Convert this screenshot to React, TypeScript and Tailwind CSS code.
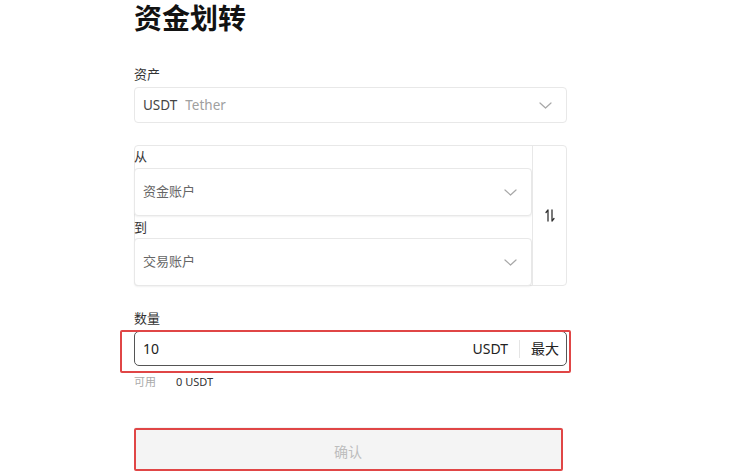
import React from "react";

const font = { fontFamily: '"Noto Sans", "Noto Sans CJK SC", sans-serif' };

function Chevron() {
  return (
    <svg width="13" height="7" viewBox="0 0 13 7" fill="none">
      <path d="M1 1l5.5 5 5.5-5" stroke="#a8a8a8" strokeWidth="1.2" strokeLinecap="round" strokeLinejoin="round" />
    </svg>
  );
}

function SwapIcon() {
  return (
    <svg width="10" height="13" viewBox="0 0 10 13" fill="none">
      <path d="M3 12V1L1 3.5" stroke="#333" strokeWidth="1.3" strokeLinecap="round" strokeLinejoin="round" />
      <path d="M7 1v11l2-2.5" stroke="#333" strokeWidth="1.3" strokeLinecap="round" strokeLinejoin="round" />
    </svg>
  );
}

function SelectBox({ children }: { children: React.ReactNode }) {
  return (
    <div className="h-[48px] flex items-center justify-between pl-2 pr-[14px] border border-[#e8e8e8] rounded-[4px] shadow-[0_1px_2px_rgba(0,0,0,0.06)] bg-white text-[13px] text-[#666]">
      <span>{children}</span>
      <Chevron />
    </div>
  );
}

export default function App() {
  return (
    <div className="relative w-[750px] h-[475px] bg-white overflow-hidden pl-[134px]" style={font}>
      <div className="w-[433px] flex flex-col">
        <h1 className="text-[28px] leading-[36px] font-bold text-[#121212]">资金划转</h1>

        {/* asset */}
        <p className="mt-[28px] text-[13px] leading-[20px] text-[#333]">资产</p>
        <div className="mt-[3px] h-[36px] flex items-center justify-between pl-2 pr-[14px] border border-[#e8e8e8] rounded-[4px] text-[13.5px]">
          <span>
            <span className="text-[#444]">USDT</span>
            <span className="ml-2 text-[#a0a0a0]">Tether</span>
          </span>
          <Chevron />
        </div>

        {/* from / to */}
        <div className="mt-[22px] flex border border-[#e8e8e8] rounded-[4px]">
          <div className="w-[398px] -ml-px -mb-px flex flex-col">
            <p className="h-[22px] leading-[20px] text-[13px] text-[#333]">从</p>
            <SelectBox>资金账户</SelectBox>
            <p className="h-[22px] leading-[22px] text-[13px] text-[#333]">到</p>
            <SelectBox>交易账户</SelectBox>
          </div>
          <div className="flex-1 border-l border-[#e8e8e8] flex items-center justify-center">
            <SwapIcon />
          </div>
        </div>

        {/* amount */}
        <p className="mt-[22px] text-[13px] leading-[20px] text-[#333]">数量</p>
        <div className="mt-[3px] h-[35px] flex items-center justify-between pl-2 pr-[7px] border border-[#555] rounded-[5px] text-[14px] text-[#222]">
          <span>10</span>
          <div className="flex items-center">
            <span>USDT</span>
            <span className="mx-[11px] w-px h-[18px] bg-[#e5e5e5]" />
            <span>最大</span>
          </div>
        </div>
        <div className="mt-[8px] flex text-[11px] leading-[16px]">
          <span className="w-[42px] text-[#aaa]">可用</span>
          <span className="text-[#333]">0 USDT</span>
        </div>

        <button className="mt-[37px] w-[428px] h-[43px] pt-[5px] bg-[#f4f4f4] rounded-[3px] text-[14px] text-[#bdbdbd]">
          确认
        </button>
      </div>

      {/* annotation outlines */}
      <div className="absolute left-[120px] top-[330px] w-[451px] h-[43px] border-2 border-[#e04646] rounded-[2px] pointer-events-none" />
      <div className="absolute left-[134px] top-[428px] w-[429px] h-[43px] border-2 border-[#e04646] rounded-[2px] pointer-events-none" />
    </div>
  );
}
